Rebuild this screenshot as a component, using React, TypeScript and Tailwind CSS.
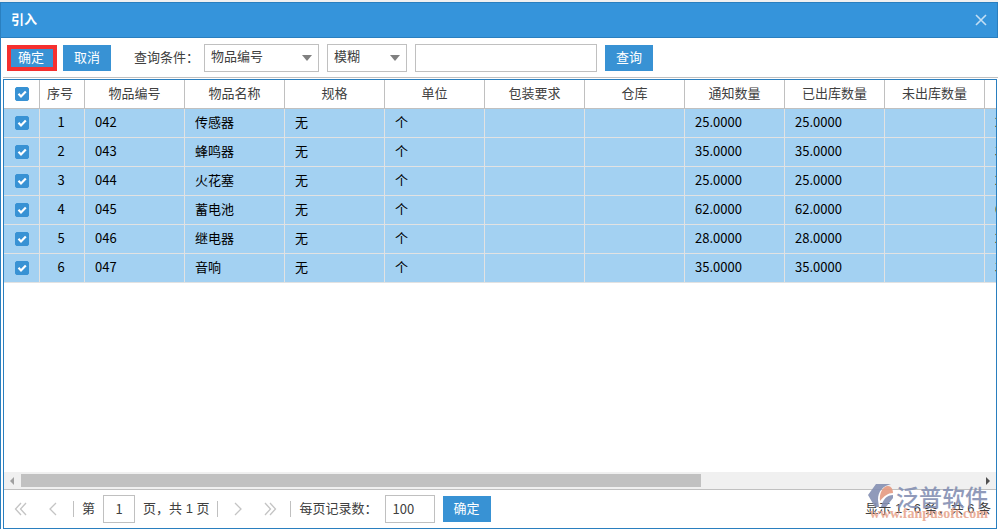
import React, { useState } from "react";

type Item = { code: string; name: string; notice: string; shipped: string };

const items: Item[] = [
  { code: "042", name: "传感器", notice: "25.0000", shipped: "25.0000" },
  { code: "043", name: "蜂鸣器", notice: "35.0000", shipped: "35.0000" },
  { code: "044", name: "火花塞", notice: "25.0000", shipped: "25.0000" },
  { code: "045", name: "蓄电池", notice: "62.0000", shipped: "62.0000" },
  { code: "046", name: "继电器", notice: "28.0000", shipped: "28.0000" },
  { code: "047", name: "音响", notice: "35.0000", shipped: "35.0000" },
];

const headings = ["物品编号", "物品名称", "规格", "单位", "包装要求", "仓库", "通知数量", "已出库数量", "未出库数量", ""];

function Button({ children }: { children: React.ReactNode }) {
  return (
    <button type="button" className="h-[26px] w-12 bg-[#3892d4] text-center leading-[26px] text-white">
      {children}
    </button>
  );
}

function Check({ label, checked, onChange }: { label: string; checked: boolean; onChange: () => void }) {
  return (
    <label className="relative mx-auto block size-3.5">
      <input
        type="checkbox"
        aria-label={label}
        checked={checked}
        onChange={onChange}
        className="peer block size-3.5 appearance-none rounded-xs border border-[#3892d4] bg-white checked:bg-[#3892d4]"
      />
      <svg viewBox="0 0 14 14" className="pointer-events-none absolute inset-0 hidden size-3.5 peer-checked:block" fill="none" stroke="#fff" strokeWidth="2.2">
        <path d="M3.5 6.8 6 9.4 10.8 4.4" />
      </svg>
    </label>
  );
}

function Select({ label, options, className }: { label: string; options: string[]; className: string }) {
  return (
    <div className={"relative " + className}>
      <select aria-label={label} className="block h-7 w-full appearance-none border border-[#c0c0c0] bg-white pr-6 pb-0.5 pl-1.5 text-[#404040]">
        {options.map((o) => (
          <option key={o}>{o}</option>
        ))}
      </select>
      <svg viewBox="0 0 10 6" className="pointer-events-none absolute top-[11px] right-[7px] h-1.5 w-2.5" fill="#808080">
        <path d="M0 0h10L5 6z" />
      </svg>
    </div>
  );
}

function PageButton({ label, d }: { label: string; d: string }) {
  return (
    <button type="button" aria-label={label} className="flex size-6 items-center justify-center">
      <svg viewBox="0 0 14 14" className="size-3.5" fill="none" stroke="#c4c4c4" strokeWidth="1.3">
        <path d={d} />
      </svg>
    </button>
  );
}

function Watermark() {
  return (
    <div className="pointer-events-none absolute right-2 bottom-2 flex h-9 w-[120px] flex-col opacity-90">
      <div className="flex h-6 items-center justify-between">
        <svg viewBox="0 0 26 24" className="h-6 w-[26px]">
          <path d="M8 0h15C15 2 10 7 10 16l1 7H7L0 11z" fill="#8590b3" />
          <path d="M12 17C11 9 15 2 20 2c3 0 5 3 5 7-5 0-9 3-13 8z" fill="#e59a80" />
          <path d="M25 11c-6 0-10 4-12 12h5l7-9z" fill="#8590b3" />
        </svg>
        <span className="font-['Noto_Sans_CJK_SC',sans-serif] text-[23px] leading-6 font-medium text-[#8590b3]">泛普软件</span>
      </div>
      <span className="text-right font-['Liberation_Serif',serif] text-[14px] leading-3 font-bold text-[#e8a68e]">www.fanpusoft.com</span>
    </div>
  );
}

export default function App() {
  const [picked, setPicked] = useState<boolean[]>(items.map(() => true));
  const all = picked.every(Boolean);
  const cell = "h-[29px] border-r border-b border-[#e2e2e2]";
  const head = "h-[29px] border-r border-b border-[#c0c0c0] font-normal";

  return (
    <main className="flex h-screen flex-col overflow-hidden bg-[#f0f0f0] pt-0.5 font-['Liberation_Sans','Noto_Sans_CJK_SC',sans-serif] text-[13px] leading-5 text-[#404040]">
      <header className="flex h-9 shrink-0 items-center justify-between border border-[#2a7fbf] bg-[#3594db] px-2.5 text-white">
        <h1 className="font-bold">引入</h1>
        <button type="button" aria-label="关闭" className="flex size-3 items-center justify-center">
          <svg viewBox="0 0 12 12" className="size-3" fill="none" stroke="#c3dff4" strokeWidth="1.6">
            <path d="M1 1l10 10M11 1L1 11" />
          </svg>
        </button>
      </header>

      <div className="flex min-h-0 flex-1 flex-col border-l border-[#2a7fbf] bg-white pl-0.5">
        <form className="flex h-10 shrink-0 items-center border-b border-[#c0c0c0] pl-1" onSubmit={(e) => e.preventDefault()}>
          <div className="mr-1.5 h-[26px] w-[50px] border-[4px] border-[#f5302f]">
            <button type="button" className="block h-[18px] w-full bg-[#3892d4] pr-0.5 leading-4 text-white">
              确定
            </button>
          </div>
          <Button>取消</Button>
          <span className="mr-1 ml-[23px] w-[66px] whitespace-nowrap">查询条件：</span>
          <Select label="查询条件" options={["物品编号", "物品名称"]} className="mr-2 w-[115px]" />
          <Select label="匹配方式" options={["模糊", "精确"]} className="mr-2 w-20" />
          <input type="text" aria-label="查询内容" className="mr-2 h-7 w-[182px] border border-[#c0c0c0] px-1.5" />
          <Button>查询</Button>
        </form>

        <section className="relative mt-px mr-px flex min-h-0 flex-1 flex-col border border-[#2a7fbf]">
          <div className="min-h-0 flex-1 overflow-hidden">
            <table className="w-[1081px] table-fixed border-separate border-spacing-0">
              <colgroup>
                <col className="w-9" />
                <col className="w-[45px]" />
                {headings.map((_, i) => (
                  <col key={i} className="w-[100px]" />
                ))}
              </colgroup>
              <thead>
                <tr>
                  <th className={head}>
                    <Check label="全选" checked={all} onChange={() => setPicked(items.map(() => !all))} />
                  </th>
                  <th className={head + " pr-1"}>序号</th>
                  {headings.map((h, i) => (
                    <th key={i} className={head}>{h}</th>
                  ))}
                </tr>
              </thead>
              <tbody className="font-['Noto_Sans_CJK_SC',sans-serif] text-black">
                {items.map((it, i) => (
                  <tr key={it.code} className={picked[i] ? "bg-[#a3d1f2]" : "bg-white"}>
                    <td className={cell}>
                      <Check label={it.name} checked={picked[i]} onChange={() => setPicked(picked.map((p, k) => (k === i ? !p : p)))} />
                    </td>
                    <td className={cell + " pr-0.5 pb-0.5 text-center"}>{i + 1}</td>
                    {[it.code, it.name, "无", "个", "", "", it.notice, it.shipped, "", it.notice].map((v, k) => (
                      <td key={k} className={cell + " px-2.5 pb-0.5"}>{v}</td>
                    ))}
                  </tr>
                ))}
              </tbody>
            </table>
          </div>

          <div className="flex h-[18px] shrink-0 items-center border-b border-[#c0c0c0] bg-[#f0f0f0]">
            <svg viewBox="0 0 17 17" className="size-[17px]" fill="#a0a0a0"><path d="M10 5v8L6 9z" /></svg>
            <div className="h-[13px] flex-1"><div className="h-[13px] w-[71%] bg-[#c1c1c1]" /></div>
            <svg viewBox="0 0 17 17" className="size-[17px]" fill="#505050"><path d="M7 5v8l4-4z" /></svg>
          </div>

          <footer className="flex h-[38px] shrink-0 items-center whitespace-nowrap">
            <div className="flex items-center gap-2 pl-[5px]">
              <PageButton label="首页" d="M7 1 1.5 7 7 13M12 1 6.500 7 12 13" />
              <PageButton label="上一页" d="M10 1 4 7l6 6" />
            </div>
            <div className="ml-2 h-4 w-px bg-[#c0c0c0]" />
            <label htmlFor="page" className="mx-2">第</label>
            <input id="page" defaultValue="1" className="h-7 w-8 border border-[#c0c0c0] pb-0.5 text-center font-['Noto_Sans_CJK_SC',sans-serif]" />
            <span className="ml-2">页，共 1 页</span>
            <div className="ml-2 h-4 w-px bg-[#c0c0c0]" />
            <div className="ml-2 flex items-center gap-2">
              <PageButton label="下一页" d="M4 1l6 6-6 6" />
              <PageButton label="末页" d="M2 1l5.500 6L2 13M7 1l5.500 6L7 13" />
            </div>
            <div className="ml-2 h-4 w-px bg-[#c0c0c0]" />
            <label htmlFor="size" className="ml-2">每页记录数：</label>
            <input id="size" defaultValue="100" className="mr-2 ml-[7px] h-7 w-[50px] border border-[#c0c0c0] px-[7px] pb-0.5 font-['Noto_Sans_CJK_SC',sans-serif]" />
            <Button>确定</Button>
            <span className="mr-[5px] ml-auto">显示 1 - 6 条，共 6 条</span>
          </footer>
          <Watermark />
        </section>
      </div>
    </main>
  );
}
